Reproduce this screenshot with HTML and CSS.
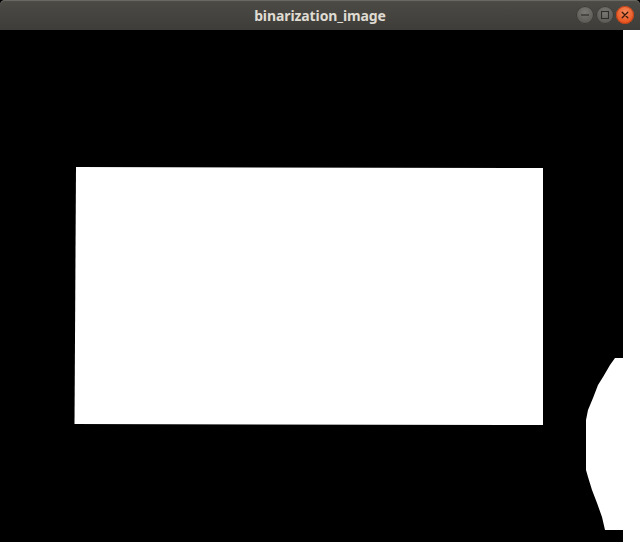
FILE: index.html
```html
<!DOCTYPE html>
<html>
<head>
<meta charset="utf-8">
<link rel="stylesheet" href="styles.css">
</head>
<body>
<div class="window">
  <div class="titlebar">
    <span class="title">binarization_image</span>
    <div class="controls">
      <span class="btn btn-min"><svg width="18" height="18" viewBox="0 0 18 18"><line x1="5" y1="9" x2="13" y2="9" stroke="#2f2e2b" stroke-width="1.2"/></svg></span>
      <span class="btn btn-max"><svg width="18" height="18" viewBox="0 0 18 18"><rect x="5.5" y="5.5" width="7" height="7" fill="none" stroke="#2f2e2b" stroke-width="1.1"/></svg></span>
      <span class="btn btn-close"><svg width="18" height="18" viewBox="0 0 18 18"><path d="M6.2 6.2 L11.8 11.8 M11.8 6.2 L6.2 11.8" stroke="#3a1a0c" stroke-width="1.3" stroke-linecap="round"/></svg></span>
    </div>
  </div>
  <div class="content">
    <svg class="image" width="640" height="512" viewBox="0 0 640 512">
      <rect x="0" y="0" width="640" height="512" fill="#ffffff"/>
      <rect x="0" y="0" width="623" height="512" fill="#000000" shape-rendering="crispEdges"/>
      <polygon points="76,137 543,138 543,395 74.5,394" fill="#ffffff"/>
      <path d="M623,0 L640,0 L640,512 L623,512 L623,500 L605,500 L602,487 L597,473 L592,460 L588,447 L586,440 L586,390 L588,380 L593,368 L598,355 L603,347 L610,335 L615,328 L623,328 Z" fill="#ffffff"/>
    </svg>
  </div>
</div>
</body>
</html>
```
FILE: styles.css
```css
html, body {
  margin: 0;
  padding: 0;
  background: #000;
}
.window {
  width: 640px;
  height: 542px;
  display: flex;
  flex-direction: column;
  overflow: hidden;
}
.titlebar {
  height: 30px;
  flex: none;
  position: relative;
  display: flex;
  align-items: center;
  justify-content: center;
  background: linear-gradient(to bottom, #56544e 0px, #4c4a45 2px, #3e3d39 29px);
  border-radius: 5px 5px 0 0;
  box-shadow: inset 0 1px 0 #6a6862;
}
.title {
  font-family: "Noto Sans", "DejaVu Sans", sans-serif;
  font-weight: bold;
  font-size: 14px;
  color: #dfdbd2;
  letter-spacing: -0.1px;
}
.controls {
  position: absolute;
  right: 6px;
  top: 6px;
  display: flex;
  gap: 2px;
}
.btn {
  width: 18px;
  height: 18px;
  border-radius: 50%;
  display: flex;
  box-sizing: border-box;
}
.btn-min, .btn-max {
  background: radial-gradient(circle at 50% 35%, #7a7873, #5c5b56 70%);
  box-shadow: inset 0 0 0 1px #3a3935;
}
.btn-close {
  background: radial-gradient(circle at 50% 35%, #f58a5c, #e9541f 70%);
  box-shadow: inset 0 0 0 1px #b8431b;
}
.content {
  flex: 1;
  display: flex;
  background: #fff;
}
.image {
  display: block;
}
```
